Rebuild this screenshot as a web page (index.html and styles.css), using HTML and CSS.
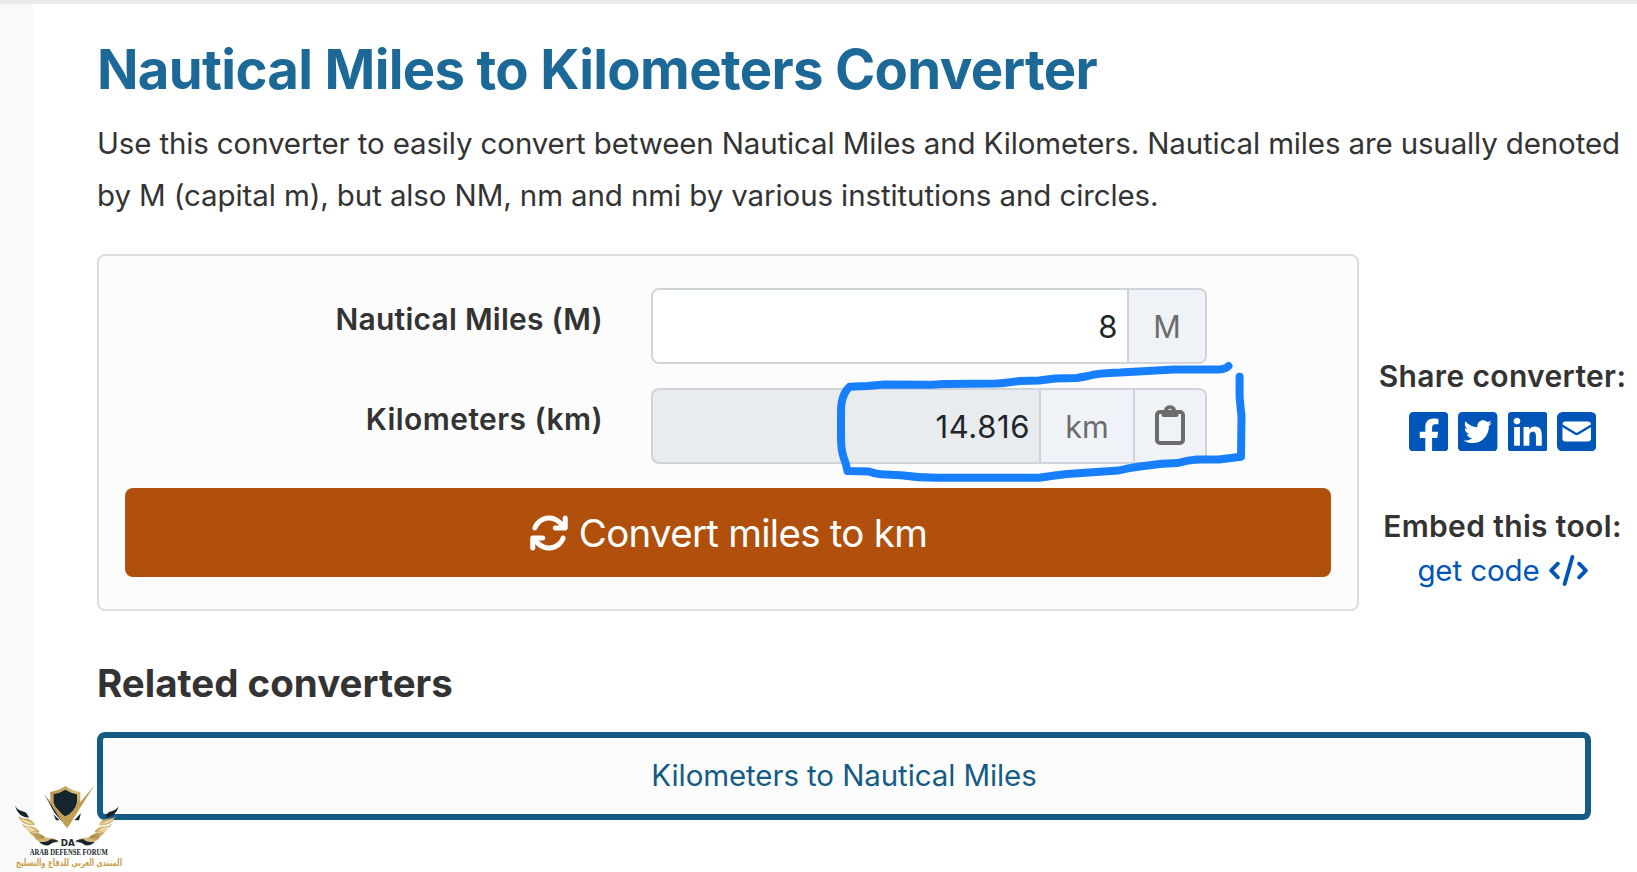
FILE: index.html
```html
<!DOCTYPE html>
<html lang="en">
<head>
    <meta charset="UTF-8">
    <meta name="viewport" content="width=device-width, initial-scale=1.0">
    <title>Nautical Miles to Kilometers Converter</title>
    <link rel="stylesheet" href="styles.css">
</head>
<body>
    <main class="page">
        <h1>Nautical Miles to Kilometers Converter</h1>
        <p class="intro"><span class="line1">Use this converter to easily convert between Nautical Miles and Kilometers. Nautical miles are usually denoted</span><br><span class="line2">by M (capital m), but also NM, nm and nmi by various institutions and circles.</span></p>

        <div class="tool">
            <!-- Converter form -->
            <form class="card">
                <div class="row">
                    <label for="miles" class="label-miles">Nautical Miles (M)</label>
                    <div class="group">
                        <input type="text" id="miles" value="8">
                        <span class="unit unit-m">M</span>
                    </div>
                </div>
                <div class="row">
                    <label for="km" class="label-km">Kilometers (km)</label>
                    <div class="group readonly">
                        <input type="text" id="km" value="14.816" readonly>
                        <span class="unit unit-km">km</span>
                        <span class="unit unit-copy">
                            <svg class="clipboard" viewBox="0 0 30 40"><rect x="2" y="7" width="26" height="31" rx="3" fill="none" stroke="#6c6c6c" stroke-width="4"/><path fill="#6c6c6c" fill-rule="evenodd" d="M6.500 5H9a6.200 6.200 0 0 1 12 0h2.500v5a2 2 0 0 1-2 2h-13a2 2 0 0 1-2-2zM15 3.700a2 2 0 1 0 0 4 2 2 0 0 0 0-4z"/></svg>
                        </span>
                    </div>
                </div>
                <button type="button" class="convert">
                    <svg class="rotate" viewBox="0 0 512 512"><path fill="#fff" d="M105.1 202.6c7.700-21.800 20.200-42.300 37.800-59.800c62.500-62.500 163.800-62.500 226.300 0L386.300 160H336c-17.700 0-32 14.300-32 32s14.300 32 32 32H463.900c17.700 0 32-14.300 32-32V64c0-17.700-14.300-32-32-32s-32 14.300-32 32v51.200L414.400 97.600c-87.500-87.500-229.300-87.500-316.800 0C73.200 122 55.600 150.700 44.800 181.400c-5.900 16.700 2.900 34.900 19.500 40.800s34.900-2.900 40.800-19.500zM39 289.300c-5 1.500-9.800 4.200-13.700 8.200c-4 4-6.700 8.800-8.100 14c-.3 1.200-.6 2.500-.8 3.800c-.3 1.700-.4 3.400-.4 5.100V448c0 17.700 14.300 32 32 32s32-14.300 32-32V396.900l17.600 17.500c87.500 87.400 229.300 87.400 316.700 0c24.400-24.400 42.100-53.100 52.900-83.700c5.900-16.700-2.900-34.900-19.500-40.800s-34.900 2.900-40.800 19.500c-7.700 21.800-20.200 42.300-37.800 59.800c-62.500 62.500-163.800 62.500-226.300 0l-.1-.1L125.600 352H176c17.700 0 32-14.300 32-32s-14.300-32-32-32H48.400c-1.600 0-3.200 .1-4.800 .3s-3.100 .5-4.600 1z"/></svg>
                    <span>Convert miles to km</span>
                </button>
            </form>

            <!-- Share / embed -->
            <aside class="side">
                <strong class="share-title">Share converter:</strong>
                <div class="share">
                    <svg viewBox="0 32 448 448"><path d="M400 32H48A48 48 0 0 0 0 80v352a48 48 0 0 0 48 48h137.250V327.690h-63V256h63v-54.640c0-62.150 37-96.480 93.670-96.480 27.140 0 55.520 4.840 55.520 4.840v61h-31.270c-30.810 0-40.420 19.120-40.420 38.730V256h68.780l-11 71.690h-57.780V480H400a48 48 0 0 0 48-48V80a48 48 0 0 0-48-48z"/></svg>
                    <svg viewBox="0 32 448 448"><path d="M400 32H48C21.500 32 0 53.500 0 80v352c0 26.500 21.500 48 48 48h352c26.500 0 48-21.500 48-48V80c0-26.500-21.500-48-48-48zm-48.900 158.800c.2 2.800.2 5.700.2 8.500 0 86.700-66 186.600-186.600 186.600-37.200 0-71.700-10.800-100.700-29.400 5.300.6 10.400.8 15.800.8 30.700 0 58.900-10.400 81.400-28-28.800-.6-53-19.500-61.300-45.500 10.100 1.500 19.200 1.500 29.600-1.200-30-6.100-52.500-32.500-52.500-64.400v-.8c8.700 4.900 18.900 7.900 29.600 8.300a65.447 65.447 0 0 1-29.200-54.600c0-12.200 3.200-23.400 8.900-33.100 32.300 39.800 80.800 65.800 135.200 68.600-9.300-44.500 24-80.600 64-80.600 18.900 0 35.900 7.900 47.900 20.700 14.800-2.800 29-8.300 41.600-15.800-4.900 15.200-15.200 28-28.800 36.100 13.200-1.400 26-5.100 37.800-10.200-8.900 13.100-20.100 24.700-32.900 34z"/></svg>
                    <svg viewBox="0 32 448 448"><path d="M416 32H31.900C14.300 32 0 46.500 0 64.300v383.400C0 465.500 14.300 480 31.900 480H416c17.600 0 32-14.500 32-32.300V64.300c0-17.800-14.400-32.300-32-32.300zM135.400 416H69V202.200h66.500V416zm-33.200-243c-21.300 0-38.500-17.300-38.500-38.500S80.900 96 102.200 96c21.200 0 38.500 17.300 38.500 38.500 0 21.300-17.200 38.500-38.500 38.500zm282.100 243h-66.400V312c0-24.800-.5-56.700-34.500-56.700-34.600 0-39.900 27-39.900 54.900V416h-66.400V202.200h63.700v29.200h.9c8.900-16.800 30.600-34.500 62.900-34.500 67.200 0 79.700 44.300 79.700 101.900V416z"/></svg>
                    <svg viewBox="0 32 448 448"><rect x="0" y="32" width="448" height="448" rx="62"/><rect x="62" y="140" width="324" height="228" rx="34" fill="#fff"/><path d="M52 182L208 277q16 10 32 0L396 182" fill="none" stroke="#0056b8" stroke-width="27"/></svg>
                </div>
                <strong class="embed-title">Embed this tool:</strong>
                <a class="code"><span>get code</span><svg viewBox="0 0 640 512"><path d="M392.800 1.200c-17-4.900-34.700 5-39.600 22l-128 448c-4.900 17 5 34.700 22 39.600s34.700-5 39.600-22l128-448c4.900-17-5-34.700-22-39.600zm80.600 120.100c-12.500 12.500-12.500 32.800 0 45.300L562.700 256l-89.400 89.400c-12.500 12.500-12.500 32.800 0 45.300s32.800 12.500 45.300 0l112-112c12.500-12.500 12.500-32.800 0-45.300l-112-112c-12.500-12.500-32.800-12.500-45.300 0zm-306.700 0c-12.500-12.500-32.800-12.500-45.300 0l-112 112c-12.500 12.500-12.500 32.800 0 45.300l112 112c12.500 12.500 32.800 12.500 45.300 0s12.500-32.800 0-45.300L77.300 256l89.400-89.400c12.500-12.500 12.500-32.800 0-45.300z"/></svg></a>
            </aside>
        </div>

        <h2>Related converters</h2>
        <a class="related"><span>Kilometers to Nautical Miles</span></a>
    </main>

    <!-- Hand-drawn marker around the result -->
    <svg class="marker" viewBox="830 355 425 135"><path d="M1228.500 366Q1226 369 1219 369.500L1174 369.500L1120 372.500Q1098 373 1088 376L1077 378L1055 378.500L1039 380.500L1020 381Q1005 383 996 383.500L944 384L932 384.800L885 384.500L867 386L849.500 386.800Q845 391 843.500 396Q841 402 841 412L841 437Q841 450 843.500 457Q846 463 847.500 471L869 471.500Q875 474 881 474.300L901 475.200Q918 477.700 937 477.800L1039 477.800Q1053 475.500 1067 474L1118.500 470.500Q1128 468 1138 466.700L1162 463.700L1178 463Q1188 460 1197 459.500L1219 459.500L1241 456.800L1241.500 416Q1240 402 1239.600 397L1239.600 376.700"/></svg>

    <!-- Forum logo -->
    <svg class="logo" viewBox="0 0 420 306">
        <defs>
            <linearGradient id="gold" x1="0" y1="0" x2="1" y2="1"><stop offset="0" stop-color="#a9853f"/><stop offset=".5" stop-color="#dcc07c"/><stop offset="1" stop-color="#a27c38"/></linearGradient>
        </defs>
        <path fill="url(#gold)" d="M151 66Q177 62 196 48Q215 62 241 66V96Q238 130 196 150Q154 130 151 96z"/>
        <path fill="#16242c" d="M161 73Q181 69 196 59Q212 69 231 73V96Q226 124 196 139Q166 124 161 96z"/>
        <path fill="#16242c" d="M132 71L200 174L189 158L164 129z"/>
        <path fill="#c19d56" d="M136 77L199 146L284 45L202 175L192 163z"/>
        <path fill="#16242c" d="M160 133L179 151H168zM223 151L243 129L237 151z"/>
        <g id="wing">
            <path fill="#16242c" d="M45 107Q53 121 75 126Q84 132 87 143Q55 142 45 107z"/>
            <path fill="url(#gold)" d="M54 137Q63 147 82 146Q101 151 106 165Q69 171 54 137zM65 160Q78 172 94 169Q112 173 119 187Q80 190 65 160zM83 181Q98 190 111 188Q129 193 137 204Q101 210 83 181z"/>
            <path fill="#f0dfb1" d="M60 144Q78 151 98 161Q75 164 60 144zM73 169Q95 173 111 184Q85 184 73 169z"/>
            <path fill="url(#gold)" d="M100 199Q120 207 143 203Q164 203 178 216Q155 219 147 222Q116 222 100 199z"/>
            <path fill="#16242c" d="M117 215Q141 219 151 208Q164 206 176 213Q156 216 148 225Q133 230 117 215z"/>
        </g>
        <use href="#wing" transform="matrix(-1 0 0 1 402 0)"/>
        <text class="logo-da" x="182" y="227" textLength="42" lengthAdjust="spacingAndGlyphs">DA</text>
        <text class="logo-name" x="89" y="254" textLength="234" lengthAdjust="spacingAndGlyphs">ARAB DEFENSE FORUM</text>
        <text class="logo-arabic" x="207" y="288" textLength="318" lengthAdjust="spacingAndGlyphs">المنتدى العربي للدفاع والتسليح</text>
    </svg>
</body>
</html>
```
FILE: styles.css
```css
*{ box-sizing: border-box; }
body{ margin: 0; height: 872px; overflow: hidden; background: #f9f9f9; border-top: 4px solid #e8ebee; color: #333; font-family: Inter, "Liberation Sans", sans-serif; font-size: 30px; }
h1, h2, p{ margin: 0; white-space: nowrap; }
.page{ margin-left: 33px; padding: 33px 0 0 64px; height: 868px; background: #fff; }

h1{ height: 80px; line-height: 64px; font-size: 54.5px; font-weight: 700; letter-spacing: -0.69px; color: #1c6998; }
.intro{ line-height: 52px; height: 137px; font-size: 29.5px; }
.line1{ letter-spacing: -0.14px; }
.line2{ letter-spacing: -0.11px; }

.tool{ display: flex; height: 357px; }
.card{ width: 1262px; height: 357px; padding: 32px 26px 0; background: #fcfcfc; border: 2px solid #ddd; border-radius: 8px; }
.row{ display: flex; justify-content: space-between; height: 76px; margin: 0 124px 24px 0; }
label{ width: 478px; padding-top: 13px; line-height: 36px; text-align: right; font-size: 30px; font-weight: 600; white-space: nowrap; }
.label-miles{ letter-spacing: 0.24px; }
.label-km{ letter-spacing: 0.42px; }
.group{ display: flex; width: 556px; height: 76px; border: 2px solid #ced4da; border-radius: 8px; background: #fff; overflow: hidden; }
.group input{ flex: 1; min-width: 0; padding: 0 9px; border: 0; outline: 0; background: transparent; text-align: right; color: #212529; font-family: inherit; font-size: 31px; letter-spacing: 0.6px; }
.readonly{ background: #e8ecef; }
.unit{ display: flex; align-items: center; justify-content: center; border-left: 2px solid #ced4da; background: #eff3f7; color: #6c6c6c; font-size: 30.5px; }
.unit-m{ width: 78px; }
.unit-km{ width: 94px; }
.unit-copy{ width: 72px; }
.clipboard{ width: 30px; height: 40px; margin-bottom: 2px; }
.convert{ display: flex; align-items: center; justify-content: center; gap: 10px; width: 1206px; height: 89px; padding: 0; border: 0; border-radius: 8px; background: #b14f0d; color: #fff; font-family: inherit; font-size: 38.5px; letter-spacing: -0.73px; white-space: nowrap; }
.rotate{ width: 40px; height: 40px; }

.side{ display: flex; flex-direction: column; align-items: center; flex-shrink: 0; width: 286px; padding: 102px 0 0 1px; white-space: nowrap; }
.side strong{ font-size: 30px; font-weight: 600; line-height: 40px; letter-spacing: 0.35px; }
.share{ display: flex; gap: 10px; margin: 16px 0 55px; }
.share svg{ width: 39.4px; height: 39.4px; fill: #0056b8; }
.code{ display: flex; align-items: center; gap: 9px; height: 48px; color: #0056b8; font-size: 29.5px; letter-spacing: -0.1px; }
.code svg{ width: 39px; height: 31px; fill: #0056b8; }

h2{ margin-top: 47px; height: 74px; line-height: 50px; font-size: 38.5px; font-weight: 700; }
.related{ display: flex; align-items: center; justify-content: center; width: 1494px; height: 88px; padding-bottom: 2px; border: 6px solid #145c85; border-radius: 8px; background: #fcfcfc; color: #145c85; font-size: 29.5px; letter-spacing: -0.1px; }

.marker{ position: absolute; left: 830px; top: 355px; width: 425px; height: 135px; fill: none; stroke: #177ffb; stroke-width: 8; stroke-linecap: round; stroke-linejoin: round; }
.logo{ position: absolute; left: 0; top: 770px; width: 140px; height: 102px; overflow: visible; }
.logo-da{ font-family: "DejaVu Sans", sans-serif; font-size: 24px; font-weight: 700; fill: #16242c; }
.logo-name{ font-family: "Liberation Serif", serif; font-size: 24px; font-weight: 700; fill: #16242c; }
.logo-arabic{ font-family: "DejaVu Sans", sans-serif; font-size: 30px; font-weight: 700; fill: #c8a04f; text-anchor: middle; }
```
